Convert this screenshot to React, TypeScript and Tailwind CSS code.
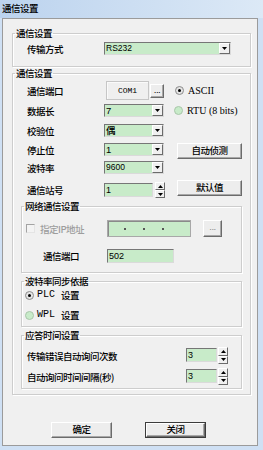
import React from "react";

const Down = () => (
  <svg width="5" height="3" viewBox="0 0 5 3">
    <path d="M0 0H5L2.5 3Z" fill="#000" />
  </svg>
);
const UpSmall = () => (
  <svg width="5" height="3" viewBox="0 0 5 3">
    <path d="M2.5 0L5 3H0Z" fill="#000" />
  </svg>
);
const DownSmall = () => (
  <svg width="5" height="3" viewBox="0 0 5 3">
    <path d="M0 0H5L2.5 3Z" fill="#000" />
  </svg>
);

function Combo({ className, children }: { className: string; children: React.ReactNode }) {
  return (
    <div
      className={
        "flex h-[13px] shrink-0 border border-t-[#767676] border-l-[#767676] border-r-[#dadada] border-b-[#dadada] bg-[#c8ebc9] " +
        className
      }
    >
      <div className="flex flex-1 items-center pl-[1px] text-[9.5px] leading-none">{children}</div>
      <div className="flex w-[11px] items-center justify-center border border-t-white border-l-white border-r-[#6b6b6b] border-b-[#6b6b6b] bg-[#f0f0f0]">
        <Down />
      </div>
    </div>
  );
}

function Edit({ className, children }: { className: string; children?: React.ReactNode }) {
  return (
    <div
      className={
        "flex shrink-0 items-center border border-t-[#767676] border-l-[#767676] border-r-[#dadada] border-b-[#dadada] bg-[#c8ebc9] pl-[1px] font-['Liberation_Sans',sans-serif] text-[9px] leading-none " +
        className
      }
    >
      {children}
    </div>
  );
}

function Spin({ className }: { className: string }) {
  return (
    <div className={"flex w-[10px] shrink-0 flex-col " + className}>
      <div className="flex flex-1 items-center justify-center border border-t-white border-l-white border-r-[#6b6b6b] border-b-[#6b6b6b] bg-[#f0f0f0]">
        <UpSmall />
      </div>
      <div className="flex flex-1 items-center justify-center border border-t-white border-l-white border-r-[#6b6b6b] border-b-[#6b6b6b] bg-[#f0f0f0]">
        <DownSmall />
      </div>
    </div>
  );
}

function Btn({ className, children }: { className: string; children: React.ReactNode }) {
  return (
    <div
      className={
        "flex shrink-0 items-center justify-center border border-t-white border-l-white border-r-[#6b6b6b] border-b-[#6b6b6b] bg-[#ededed] text-[9.5px] leading-none tracking-[-0.5px] shadow-[inset_-1px_-1px_0_#a8a8a8] " +
        className
      }
    >
      {children}
    </div>
  );
}

function Radio({ on }: { on?: boolean }) {
  return on ? (
    <div className="flex h-[9px] w-[9px] shrink-0 items-center justify-center rounded-full border border-[#8c8c8c] bg-[#e4e4e4]">
      <div className="h-[3px] w-[3px] rounded-full bg-black" />
    </div>
  ) : (
    <div className="h-[9px] w-[9px] shrink-0 rounded-full border border-[#a9c6aa] bg-[#c8ebc9]" />
  );
}

const group =
  "border border-[#cdcdcd] shadow-[inset_1px_1px_0_#ffffff,1px_1px_0_#ffffff]";
const legend = "ml-[2px] px-[1px] text-[9.5px] leading-[12px] tracking-[-0.5px]";
const lbl = "w-[77px] shrink-0 text-[9.5px] leading-[12px] tracking-[-0.5px]";
const txt = "text-[9.5px] leading-[12px] tracking-[-0.5px]";

export default function App() {
  return (
    <div className="flex h-[450px] w-[263px] flex-col bg-[#cfe0f4] font-['Noto_Sans_CJK_SC',sans-serif] font-medium text-black">
      <div className="flex h-[18px] shrink-0 items-center bg-linear-to-r from-[#bcd3ee] to-[#dce9f6] pl-[2px] text-[9.5px] leading-none tracking-[-0.5px]">
        通信设置
      </div>
      <div className="mb-[4px] ml-[2px] mr-[5px] flex flex-1 flex-col border border-[#9b9b9b] bg-[#f0f0f0]">
        {/* Group 1 */}
        <fieldset className={"ml-[9px] mt-[8px] w-[239px] " + group}>
          <legend className={legend}>通信设置</legend>
          <div className="flex items-center pb-[11px] pl-[14px] pt-[3px]">
            <span className={lbl}>传输方式</span>
            <Combo className="w-[127px]">
              <span className="font-['Liberation_Sans',sans-serif] text-[8.5px] font-normal">RS232</span>
            </Combo>
          </div>
        </fieldset>

        {/* Group 2 */}
        <fieldset className={"ml-[9px] w-[239px] " + group}>
          <legend className={legend}>通信设置</legend>
          <div className="flex flex-col pl-[14px] pt-[2px]">
            <div className="flex h-[19px] items-center">
              <span className={lbl}>通信端口</span>
              <div className="ml-[2px] flex h-[19px] w-[43px] items-center justify-center border border-[#c6c6c6] bg-[#efefef] font-['Liberation_Mono',monospace] text-[8px] font-normal leading-none shadow-[inset_1px_1px_0_#fafafa]">
                COM1
              </div>
              <Btn className="ml-[1px] h-[14px] w-[14px] pb-[2px] font-['Liberation_Sans',sans-serif]">...</Btn>
              <div className="ml-[11px]">
                <Radio on />
              </div>
              <span className="ml-[4px] font-['Liberation_Serif',serif] text-[10px] font-normal leading-none">ASCII</span>
            </div>
            <div className="mt-[4px] flex h-[13px] items-center">
              <span className={lbl}>数据长</span>
              <Combo className="w-[60px]">
                <span className="font-['Liberation_Sans',sans-serif] font-normal">7</span>
              </Combo>
              <div className="ml-[10px]">
                <Radio />
              </div>
              <span className="ml-[4px] font-['Liberation_Serif',serif] text-[10px] font-normal leading-none">RTU (8 bits)</span>
            </div>
            <div className="mt-[7px] flex h-[13px] items-center">
              <span className={lbl}>校验位</span>
              <Combo className="w-[60px]">偶</Combo>
            </div>
            <div className="mt-[6px] flex h-[16px] items-start">
              <span className={lbl + " mt-[1px]"}>停止位</span>
              <Combo className="w-[60px]">
                <span className="font-['Liberation_Sans',sans-serif] font-normal">1</span>
              </Combo>
              <Btn className="ml-[13px] h-[16px] w-[65px]">自动侦测</Btn>
            </div>
            <div className="mt-[2px] flex h-[13px] items-center">
              <span className={lbl}>波特率</span>
              <Combo className="w-[60px]">
                <span className="font-['Liberation_Sans',sans-serif] text-[8.5px] font-normal">9600</span>
              </Combo>
            </div>
            <div className="mt-[6px] flex h-[18px] items-start">
              <span className={lbl + " mt-[4px]"}>通信站号</span>
              <Edit className="mt-[3px] h-[14px] w-[49px] font-normal">1</Edit>
              <Spin className="ml-[2px] mt-[2px] h-[16px]" />
              <Btn className="ml-[12px] h-[16px] w-[65px]">默认值</Btn>
            </div>
          </div>

          <div className="flex flex-col pb-[5px]">
            {/* 网络通信设置 */}
            <fieldset className={"ml-[8px] mt-[2px] w-[221px] " + group}>
              <legend className={legend}>网络通信设置</legend>
              <div className="flex flex-col pb-[9px] pt-[8px]">
                <div className="flex h-[17px] items-center pl-[4px]">
                  <div className="h-[9px] w-[9px] shrink-0 border border-t-[#a3a3a3] border-l-[#a3a3a3] border-r-[#e4e4e4] border-b-[#e4e4e4] bg-[#f3f3f3]" />
                  <span className={"ml-[5px] w-[67px] shrink-0 text-[#9d9d9d] " + txt}>指定IP地址</span>
                  <div className="flex h-[17px] w-[84px] shrink-0 items-center gap-[17px] border border-[#a8a8a8] bg-[#c8ebc9] pl-[16px] shadow-[inset_1px_1px_0_#8a8a8a]">
                    <span className="h-[2px] w-[2px] bg-[#555]" />
                    <span className="h-[2px] w-[2px] bg-[#555]" />
                    <span className="h-[2px] w-[2px] bg-[#555]" />
                  </div>
                  <Btn className="ml-[12px] h-[17px] w-[19px] pb-[3px] font-['Liberation_Sans',sans-serif] text-[#8a8a8a]">...</Btn>
                </div>
                <div className="mt-[12px] flex h-[14px] items-center pl-[21px]">
                  <span className={"w-[64px] shrink-0 " + txt}>通信端口</span>
                  <Edit className="h-[14px] w-[67px] font-normal">502</Edit>
                </div>
              </div>
            </fieldset>

            {/* 波特率同步依据 */}
            <fieldset className={"ml-[8px] mt-[2px] w-[221px] " + group}>
              <legend className={legend}>波特率同步依据</legend>
              <div className="flex flex-col pb-[5px] pt-[2px]">
                <div className="flex h-[12px] items-center pl-[3px]">
                  <Radio on />
                  <span className="ml-[3px] font-['Liberation_Mono',monospace] text-[10px] font-normal leading-none">PLC</span>
                  <span className={"ml-[6px] " + txt}>设置</span>
                </div>
                <div className="mt-[8px] flex h-[12px] items-center pl-[3px]">
                  <Radio />
                  <span className="ml-[3px] font-['Liberation_Mono',monospace] text-[10px] font-normal leading-none">WPL</span>
                  <span className={"ml-[6px] " + txt}>设置</span>
                </div>
              </div>
            </fieldset>

            {/* 应答时间设置 */}
            <fieldset className={"ml-[8px] mt-[2px] w-[221px] " + group}>
              <legend className={legend}>应答时间设置</legend>
              <div className="flex flex-col pb-[3px] pt-[6px]">
                <div className="flex h-[17px] items-start pl-[5px]">
                  <span className={"mt-[3px] w-[159px] shrink-0 " + txt}>传输错误自动询问次数</span>
                  <Edit className="mt-[1px] h-[14px] w-[31px] font-normal">3</Edit>
                  <Spin className="ml-[1px] h-[17px]" />
                </div>
                <div className="mt-[4px] flex h-[17px] items-start pl-[5px]">
                  <span className={"mt-[3px] w-[159px] shrink-0 " + txt}>自动询问时间间隔(秒)</span>
                  <Edit className="mt-[1px] h-[14px] w-[31px] font-normal">3</Edit>
                  <Spin className="ml-[1px] h-[17px]" />
                </div>
              </div>
            </fieldset>
          </div>
        </fieldset>

        {/* Bottom buttons */}
        <div className="mt-[27px] flex">
          <Btn className="ml-[48px] h-[16px] w-[61px]">确定</Btn>
          <div className="ml-[33px] h-[16px] w-[61px] border border-[#3c3c3c]">
            <Btn className="h-full w-full">关闭</Btn>
          </div>
        </div>
      </div>
    </div>
  );
}
